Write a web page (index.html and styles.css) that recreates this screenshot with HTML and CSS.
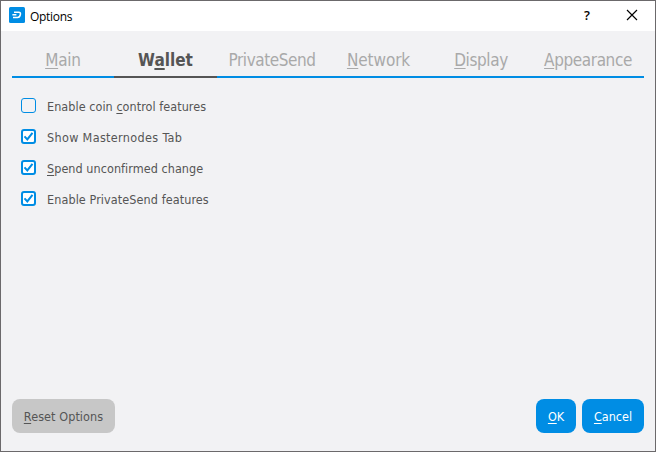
FILE: index.html
```html
<!DOCTYPE html>
<html lang="en">
<head>
<meta charset="utf-8">
<title>Options</title>
<link rel="stylesheet" href="styles.css">
</head>
<body>
<div class="window">
  <header class="titlebar">
    <svg class="logo" width="16" height="16" viewBox="0 0 16 16">
      <rect width="16" height="16" rx="1.5" fill="#008de4"/>
      <path d="M5 5.2h4.6c1.5 0 2.1.8 1.8 2.3-.4 1.9-1.3 2.9-2.9 2.9H4M3.4 7.8h4" fill="none" stroke="#fff" stroke-width="1.5"/>
    </svg>
    <h1 class="title">Options</h1>
    <span class="help">?</span>
    <svg class="close" width="12" height="12" viewBox="0 0 12 12"><path d="M1 1l10 10M11 1L1 11" stroke="#000" stroke-width="1.15"/></svg>
  </header>
  <nav class="tabs">
    <a class="tab main"><u>M</u>ain</a>
    <a class="tab wallet active">W<u>a</u>llet</a>
    <a class="tab private">PrivateSend</a>
    <a class="tab network"><u>N</u>etwork</a>
    <a class="tab display"><u>D</u>isplay</a>
    <a class="tab appearance"><u>A</u>ppearance</a>
  </nav>
  <main class="options">
    <label class="option"><svg class="box" width="15" height="15" viewBox="0 0 15 15"><rect class="empty" x=".5" y=".5" width="14" height="14" rx="2.5"/></svg><span class="coin">Enable coin <u>c</u>ontrol features</span></label>
    <label class="option"><svg class="box" width="15" height="15" viewBox="0 0 15 15"><rect class="full" x="1" y="1" width="13" height="13" rx="2"/><path class="tick" d="M3.5 7.4l2.8 3 5.2-6.6"/></svg><span class="masternodes">Show Masternodes Tab</span></label>
    <label class="option"><svg class="box" width="15" height="15" viewBox="0 0 15 15"><rect class="full" x="1" y="1" width="13" height="13" rx="2"/><path class="tick" d="M3.5 7.4l2.8 3 5.2-6.6"/></svg><span class="spend"><u>S</u>pend unconfirmed change</span></label>
    <label class="option"><svg class="box" width="15" height="15" viewBox="0 0 15 15"><rect class="full" x="1" y="1" width="13" height="13" rx="2"/><path class="tick" d="M3.5 7.4l2.8 3 5.2-6.6"/></svg><span class="send">Enable PrivateSend features</span></label>
  </main>
  <footer class="actions">
    <button class="button reset"><u>R</u>eset Options</button>
    <button class="button ok"><u>O</u>K</button>
    <button class="button cancel"><u>C</u>ancel</button>
  </footer>
</div>
</body>
</html>
```
FILE: styles.css
```css
* { box-sizing: border-box; }
body {
  margin: 0;
  font-family: "DejaVu Sans Condensed", "DejaVu Sans", sans-serif;
  font-stretch: condensed;
  font-size: 12.5px;
  color: #555;
}
u { text-decoration: underline; text-decoration-thickness: 1px; text-underline-offset: 2px; text-decoration-skip-ink: none; }
.window {
  width: 656px;
  height: 452px;
  border: 1px solid #6b696b;
  background: #f2f2f4;
  display: flex;
  flex-direction: column;
}
.titlebar {
  height: 30px;
  padding: 0 17px 0 8px;
  background: #fff;
  color: #000;
  display: flex;
  align-items: center;
}
.logo { margin-top: -2px; }
.title {
  flex: 1;
  margin: 0 0 0 5px;
  font: 12px "Open Sans", sans-serif;
  letter-spacing: -.3px;
}
.help { font: 600 13px "Open Sans", sans-serif; margin: -2px 36px 0 0; }
.close { margin-top: -2px; }
.tabs {
  margin: 13px 11px 0;
  height: 34px;
  display: grid;
  grid-template-columns: 102px 103px 110px 103px 102px 112px;
}
.tab {
  border-bottom: 2px solid #008de4;
  color: #a9a9a9;
  font-size: 17px;
  line-height: 32px;
  text-align: center;
  white-space: nowrap;
}
.private { letter-spacing: -.45px; }
.network { letter-spacing: -.1px; }
.display, .appearance { letter-spacing: -.4px; }
.main { letter-spacing: -.2px; }
.tab.active { border-color: #555; color: #555; font-weight: bold; }
.tab.active u { text-decoration-thickness: 2px; }
.options {
  flex: 1;
  padding: 13px 20px;
}
.option {
  height: 31px;
  display: flex;
  align-items: center;
  white-space: nowrap;
}
.coin, .spend { letter-spacing: .05px; }
.masternodes { letter-spacing: .34px; }
.send { letter-spacing: .09px; }
.box { margin: -2px 11px 0 0; }
.empty { fill: none; stroke: #008de4; }
.full { fill: #fff; stroke: #008de4; stroke-width: 2; }
.tick { fill: none; stroke: #008de4; stroke-width: 2; }
.actions {
  display: flex;
  gap: 6px;
  padding: 0 11px 18px;
}
.button {
  height: 34px;
  padding: 1px 0 0;
  border: 0;
  border-radius: 8px;
  font: inherit;
  color: #fff;
  background: #008de4;
}
.reset { width: 103px; margin-right: auto; background: #c7c7c7; color: #555; letter-spacing: .08px; }
.ok { width: 40px; }
.cancel { width: 62px; }
```
